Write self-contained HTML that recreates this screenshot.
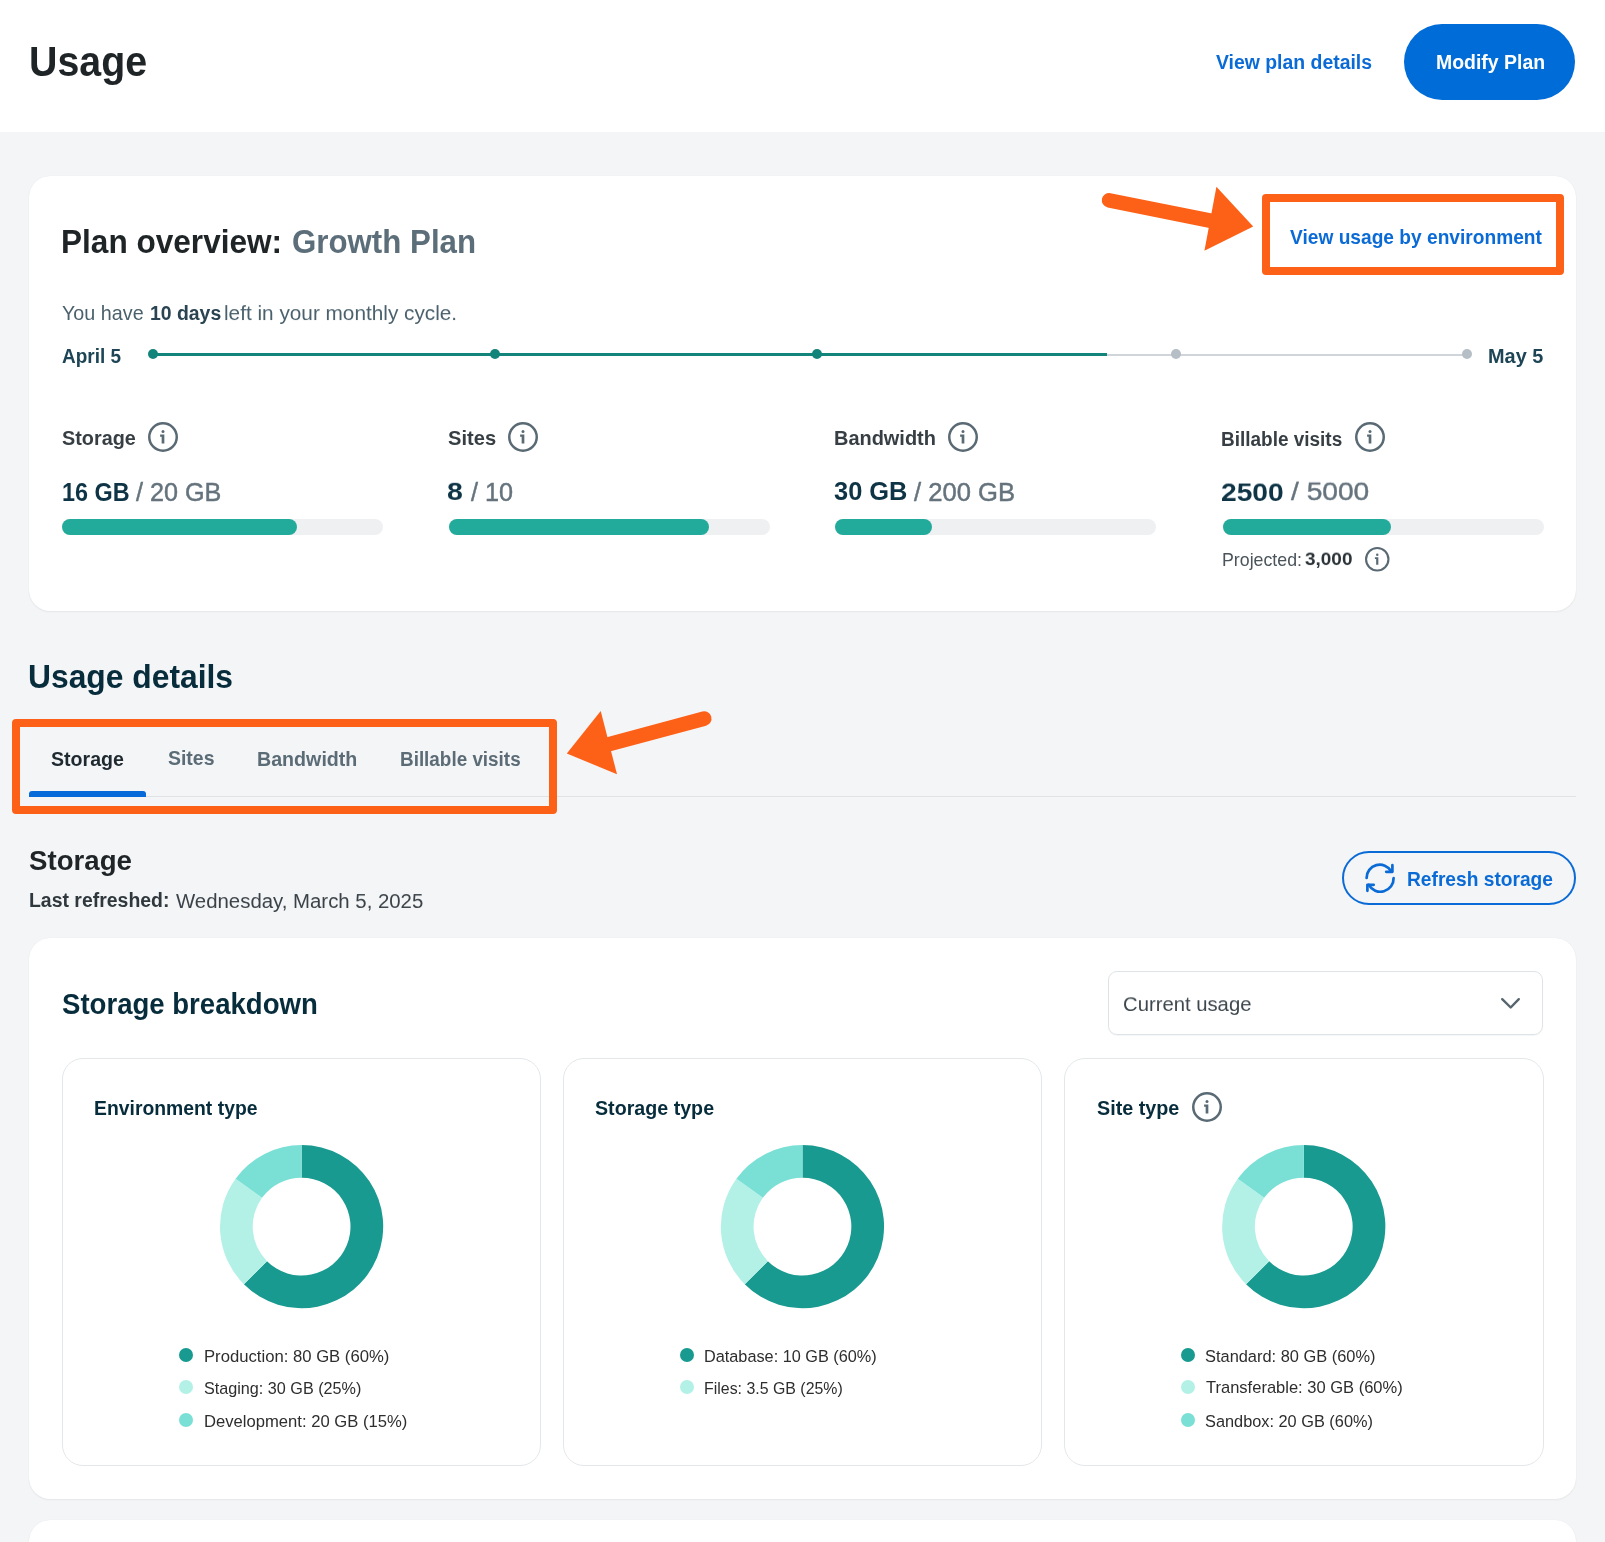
<!DOCTYPE html>
<html><head><meta charset="utf-8">
<style>
*{margin:0;padding:0;box-sizing:border-box}
html,body{width:1605px;height:1542px;overflow:hidden;background:#f4f5f7;font-family:"Liberation Sans",sans-serif}
.a{position:absolute;white-space:nowrap;will-change:transform}
b{font-weight:700}

</style></head><body>
<div class="a" style="left:0;top:0;width:1605px;height:132px;background:#fff"></div>
<div class="a" style="left:1404.4px;top:23.9px;width:171.4px;height:75.9px;border-radius:38px;background:#006cd7"></div>
<div class="a" style="left:29px;top:175.7px;width:1546.8px;height:435.1px;background:#fff;border-radius:21px;box-shadow:0 0 1px rgba(30,40,50,0.10),0 1px 2px rgba(30,40,50,0.06)"></div>
<div class="a" style="left:153px;top:352.5px;width:954px;height:3.4px;background:#12847a"></div>
<div class="a" style="left:1107px;top:353.6px;width:360px;height:2.2px;background:#cfd5da"></div>
<div class="a" style="left:147.80px;top:348.90px;width:10.4px;height:10.4px;border-radius:50%;background:#12847a"></div>
<div class="a" style="left:489.90px;top:348.90px;width:10.4px;height:10.4px;border-radius:50%;background:#12847a"></div>
<div class="a" style="left:812.40px;top:348.90px;width:10.4px;height:10.4px;border-radius:50%;background:#12847a"></div>
<div class="a" style="left:1170.70px;top:348.90px;width:10.4px;height:10.4px;border-radius:50%;background:#b6bec6"></div>
<div class="a" style="left:1461.90px;top:348.90px;width:10.4px;height:10.4px;border-radius:50%;background:#b6bec6"></div>
<div class="a" style="left:62.40px;top:519px;width:321px;height:16.2px;border-radius:8px;background:#eef0f2"></div>
<div class="a" style="left:62.40px;top:519px;width:234.80px;height:16.2px;border-radius:8px;background:#22ab9b"></div>
<div class="a" style="left:449.00px;top:519px;width:321px;height:16.2px;border-radius:8px;background:#eef0f2"></div>
<div class="a" style="left:449.00px;top:519px;width:260.00px;height:16.2px;border-radius:8px;background:#22ab9b"></div>
<div class="a" style="left:835.10px;top:519px;width:321px;height:16.2px;border-radius:8px;background:#eef0f2"></div>
<div class="a" style="left:835.10px;top:519px;width:96.90px;height:16.2px;border-radius:8px;background:#22ab9b"></div>
<div class="a" style="left:1222.50px;top:519px;width:321px;height:16.2px;border-radius:8px;background:#eef0f2"></div>
<div class="a" style="left:1222.50px;top:519px;width:168.20px;height:16.2px;border-radius:8px;background:#22ab9b"></div>
<svg class="a" style="left:147.60px;top:422.30px;overflow:visible" width="30.00" height="30.00" viewBox="0 0 30.00 30.00"><circle cx="15.00" cy="15.00" r="13.75" fill="none" stroke="#5a6a74" stroke-width="2.50"/><circle cx="15.00" cy="9.50" r="1.50" fill="#5a6a74"/><path d="M12.10 12.40 H16.35 V21.60 H13.65 V14.70 H12.10 Z" fill="#5a6a74"/></svg>
<svg class="a" style="left:508.40px;top:422.30px;overflow:visible" width="30.00" height="30.00" viewBox="0 0 30.00 30.00"><circle cx="15.00" cy="15.00" r="13.75" fill="none" stroke="#5a6a74" stroke-width="2.50"/><circle cx="15.00" cy="9.50" r="1.50" fill="#5a6a74"/><path d="M12.10 12.40 H16.35 V21.60 H13.65 V14.70 H12.10 Z" fill="#5a6a74"/></svg>
<svg class="a" style="left:948.00px;top:422.30px;overflow:visible" width="30.00" height="30.00" viewBox="0 0 30.00 30.00"><circle cx="15.00" cy="15.00" r="13.75" fill="none" stroke="#5a6a74" stroke-width="2.50"/><circle cx="15.00" cy="9.50" r="1.50" fill="#5a6a74"/><path d="M12.10 12.40 H16.35 V21.60 H13.65 V14.70 H12.10 Z" fill="#5a6a74"/></svg>
<svg class="a" style="left:1355.40px;top:422.30px;overflow:visible" width="30.00" height="30.00" viewBox="0 0 30.00 30.00"><circle cx="15.00" cy="15.00" r="13.75" fill="none" stroke="#5a6a74" stroke-width="2.50"/><circle cx="15.00" cy="9.50" r="1.50" fill="#5a6a74"/><path d="M12.10 12.40 H16.35 V21.60 H13.65 V14.70 H12.10 Z" fill="#5a6a74"/></svg>
<svg class="a" style="left:1364.75px;top:547.25px;overflow:visible" width="24.50" height="24.50" viewBox="0 0 24.50 24.50"><circle cx="12.25" cy="12.25" r="11.20" fill="none" stroke="#5a6a74" stroke-width="2.10"/><circle cx="12.25" cy="7.76" r="1.23" fill="#5a6a74"/><path d="M9.88 10.13 H13.35 V17.64 H11.15 V12.01 H9.88 Z" fill="#5a6a74"/></svg>
<div class="a" style="left:30px;top:796px;width:1546px;height:1.3px;background:#dfe3e6"></div>
<div class="a" style="left:29px;top:791px;width:117.4px;height:5.8px;border-radius:3px 3px 0 0;background:#066bd8"></div>
<div class="a" style="left:1341.7px;top:851px;width:234.2px;height:54.1px;border:2.6px solid #0b6bd6;border-radius:28px"></div>
<svg class="a" style="left:1362px;top:860px" width="36" height="36" viewBox="0 0 36 36" fill="none" stroke="#0b6bd6" stroke-width="2.7" stroke-linecap="round" stroke-linejoin="round"><path d="M4.6 18 A13.2 13.2 0 0 1 29.2 11.2"/><path d="M31.6 18 A13.2 13.2 0 0 1 6.8 24.8"/><path d="M30.4 5.2 L30.4 11.8 L24.2 11.8"/><path d="M5.4 30.8 L5.4 24.8 L11.7 24.8"/></svg>
<div class="a" style="left:29px;top:938.3px;width:1546.8px;height:560.7px;background:#fff;border-radius:21px;box-shadow:0 0 1px rgba(30,40,50,0.10),0 1px 2px rgba(30,40,50,0.06)"></div>
<div class="a" style="left:1108.2px;top:971.1px;width:435.1px;height:64.4px;border:1.5px solid #dde3e6;border-radius:9px;box-shadow:0 1px 1px rgba(0,0,0,0.04)"></div>
<svg class="a" style="left:1498px;top:994px" width="26" height="18" viewBox="0 0 26 18"><path d="M4.2 5.2 L12.7 13.5 L20.8 5.2" fill="none" stroke="#56656e" stroke-width="2.4" stroke-linecap="round" stroke-linejoin="round"/></svg>
<div class="a" style="left:62.20px;top:1057.6px;width:478.60px;height:408.3px;border:1.8px solid #e3e7ea;border-radius:21px"></div>
<div class="a" style="left:563.00px;top:1057.6px;width:478.70px;height:408.3px;border:1.8px solid #e3e7ea;border-radius:21px"></div>
<div class="a" style="left:1063.90px;top:1057.6px;width:479.50px;height:408.3px;border:1.8px solid #e3e7ea;border-radius:21px"></div>
<svg class="a" style="left:1192.00px;top:1091.70px;overflow:visible" width="30.00" height="30.00" viewBox="0 0 30.00 30.00"><circle cx="15.00" cy="15.00" r="13.75" fill="none" stroke="#5a6a74" stroke-width="2.50"/><circle cx="15.00" cy="9.50" r="1.50" fill="#5a6a74"/><path d="M12.10 12.40 H16.35 V21.60 H13.65 V14.70 H12.10 Z" fill="#5a6a74"/></svg>
<svg class="a" style="left:0;top:0" width="1605" height="1542"><path d="M301.60 1145.00 A81.60 81.60 0 1 1 243.90 1284.30 L267.02 1261.18 A48.90 48.90 0 1 0 301.60 1177.70 Z" fill="#189a90"/><path d="M243.90 1284.30 A81.60 81.60 0 0 1 235.58 1178.64 L262.04 1197.86 A48.90 48.90 0 0 0 267.02 1261.18 Z" fill="#b3f1e7"/><path d="M235.58 1178.64 A81.60 81.60 0 0 1 301.60 1145.00 L301.60 1177.70 A48.90 48.90 0 0 0 262.04 1197.86 Z" fill="#7ae0d6"/><path d="M802.45 1145.00 A81.60 81.60 0 1 1 744.75 1284.30 L767.87 1261.18 A48.90 48.90 0 1 0 802.45 1177.70 Z" fill="#189a90"/><path d="M744.75 1284.30 A81.60 81.60 0 0 1 736.43 1178.64 L762.89 1197.86 A48.90 48.90 0 0 0 767.87 1261.18 Z" fill="#b3f1e7"/><path d="M736.43 1178.64 A81.60 81.60 0 0 1 802.45 1145.00 L802.45 1177.70 A48.90 48.90 0 0 0 762.89 1197.86 Z" fill="#7ae0d6"/><path d="M1303.75 1145.00 A81.60 81.60 0 1 1 1246.05 1284.30 L1269.17 1261.18 A48.90 48.90 0 1 0 1303.75 1177.70 Z" fill="#189a90"/><path d="M1246.05 1284.30 A81.60 81.60 0 0 1 1237.73 1178.64 L1264.19 1197.86 A48.90 48.90 0 0 0 1269.17 1261.18 Z" fill="#b3f1e7"/><path d="M1237.73 1178.64 A81.60 81.60 0 0 1 1303.75 1145.00 L1303.75 1177.70 A48.90 48.90 0 0 0 1264.19 1197.86 Z" fill="#7ae0d6"/></svg>
<div class="a" style="left:178.80px;top:1347.50px;width:14.2px;height:14.2px;border-radius:50%;background:#189a90"></div>
<div class="a" style="left:178.80px;top:1380.30px;width:14.2px;height:14.2px;border-radius:50%;background:#b3f1e7"></div>
<div class="a" style="left:178.80px;top:1413.10px;width:14.2px;height:14.2px;border-radius:50%;background:#7ae0d6"></div>
<div class="a" style="left:679.60px;top:1347.50px;width:14.2px;height:14.2px;border-radius:50%;background:#189a90"></div>
<div class="a" style="left:679.60px;top:1380.30px;width:14.2px;height:14.2px;border-radius:50%;background:#b3f1e7"></div>
<div class="a" style="left:1180.50px;top:1347.50px;width:14.2px;height:14.2px;border-radius:50%;background:#189a90"></div>
<div class="a" style="left:1180.50px;top:1380.30px;width:14.2px;height:14.2px;border-radius:50%;background:#b3f1e7"></div>
<div class="a" style="left:1180.50px;top:1413.10px;width:14.2px;height:14.2px;border-radius:50%;background:#7ae0d6"></div>
<div class="a" style="left:29px;top:1520.4px;width:1546.8px;height:100px;background:#fff;border-radius:21px;box-shadow:0 0 1px rgba(30,40,50,0.10),0 1px 2px rgba(30,40,50,0.06)"></div>
<div class="a" style="left:1261.8px;top:194.3px;width:302.2px;height:81px;border:8.3px solid #fd6017;border-radius:4px"></div>
<div class="a" style="left:12.1px;top:719.4px;width:544.6px;height:95.4px;border:8.3px solid #fd6017;border-radius:4px"></div>
<svg class="a" style="left:0;top:0" width="1605" height="1542"><line x1="1109.1" y1="200.3" x2="1212" y2="221" stroke="#fd6017" stroke-width="14.6" stroke-linecap="round"/><polygon points="1216.4,186.8 1253.2,226.6 1204.4,250.7" fill="#fd6017"/><line x1="704.2" y1="718.6" x2="606" y2="745" stroke="#fd6017" stroke-width="14.6" stroke-linecap="round"/><polygon points="566.8,753.4 600.7,711.1 617,774.3" fill="#fd6017"/></svg>
<div id="usage" class="a" style="left:28.95px;top:43.14px;font-size:39.356px;line-height:39.356px;font-weight:700;color:#1f2427;transform:scaleY(1.082);transform-origin:0 33.31px;">Usage</div>
<div id="vpd" class="a" style="left:1216.00px;top:53.24px;font-size:19.414px;line-height:19.414px;font-weight:700;color:#0b6bd6;transform:scaleY(1.063);transform-origin:0 16.43px;">View plan details</div>
<div id="modify" class="a" style="left:1435.98px;top:53.23px;font-size:19.450px;line-height:19.450px;font-weight:700;color:#fff;transform:scaleY(1.061);transform-origin:0 16.46px;">Modify Plan</div>
<div id="po" class="a" style="left:60.95px;top:227.15px;font-size:31.591px;line-height:31.591px;font-weight:700;color:#1f2427;transform:scaleY(1.044);transform-origin:0 26.74px;">Plan overview:</div>
<div id="gp" class="a" style="left:291.98px;top:227.14px;font-size:31.266px;line-height:31.266px;font-weight:700;color:#5c6e79;transform:scaleY(1.055);transform-origin:0 26.47px;">Growth Plan</div>
<div id="vube" class="a" style="left:1289.89px;top:227.63px;font-size:19.165px;line-height:19.165px;font-weight:700;color:#0b6bd6;transform:scaleY(1.062);transform-origin:0 16.22px;">View usage by environment</div>
<div id="left1" class="a" style="left:62.01px;top:303.65px;font-size:19.753px;line-height:19.753px;font-weight:400;color:#4a616d;transform:scaleY(1.045);transform-origin:0 16.72px;">You have</div>
<div id="left2" class="a" style="left:149.64px;top:303.61px;font-size:19.419px;line-height:19.419px;font-weight:700;color:#2a4452;transform:scaleY(1.063);transform-origin:0 16.44px;">10 days</div>
<div id="left3" class="a" style="left:224.42px;top:302.64px;font-size:20.784px;line-height:20.784px;font-weight:400;color:#4a616d;transform:scaleY(0.993);transform-origin:0 17.59px;">left in your monthly cycle.</div>
<div id="apr" class="a" style="left:61.98px;top:347.10px;font-size:18.983px;line-height:18.983px;font-weight:700;color:#1d4556;transform:scaleY(1.087);transform-origin:0 16.07px;">April 5</div>
<div id="may" class="a" style="left:1487.97px;top:347.02px;font-size:19.921px;line-height:19.921px;font-weight:700;color:#1d4556;transform:scaleY(1.036);transform-origin:0 16.86px;">May 5</div>
<div id="lab0" class="a" style="left:61.75px;top:429.02px;font-size:19.828px;line-height:19.828px;font-weight:700;color:#373f44;transform:scaleY(1.019);transform-origin:0 16.78px;">Storage</div>
<div id="lab1" class="a" style="left:447.95px;top:428.01px;font-size:20.123px;line-height:20.123px;font-weight:700;color:#373f44;transform:scaleY(1.004);transform-origin:0 17.03px;">Sites</div>
<div id="lab2" class="a" style="left:833.67px;top:428.99px;font-size:19.950px;line-height:19.950px;font-weight:700;color:#373f44;transform:scaleY(1.013);transform-origin:0 16.89px;">Bandwidth</div>
<div id="lab3" class="a" style="left:1221.44px;top:430.03px;font-size:18.980px;line-height:18.980px;font-weight:700;color:#373f44;transform:scaleY(1.064);transform-origin:0 16.07px;">Billable visits</div>
<div id="vb0" class="a" style="left:61.85px;top:481.52px;font-size:23.406px;line-height:23.406px;font-weight:700;color:#0e3446;transform:scaleY(1.105);transform-origin:0 19.81px;">16 GB</div>
<div id="vg0" class="a" style="left:136.00px;top:479.52px;font-size:25.200px;line-height:25.200px;font-weight:400;color:#65737d;transform:scaleY(1.027);transform-origin:0 21.33px;-webkit-text-stroke:0.45px #65737d;">/ 20 GB</div>
<div id="vb1" class="a" style="left:447.34px;top:476.49px;font-size:28.500px;line-height:28.500px;font-weight:700;color:#0e3446;transform:scaleY(0.908);transform-origin:0 24.13px;">8</div>
<div id="vg1" class="a" style="left:471.00px;top:479.51px;font-size:25.231px;line-height:25.231px;font-weight:400;color:#65737d;transform:scaleY(1.025);transform-origin:0 21.36px;-webkit-text-stroke:0.45px #65737d;">/ 10</div>
<div id="vb2" class="a" style="left:833.63px;top:479.47px;font-size:25.420px;line-height:25.420px;font-weight:700;color:#0e3446;transform:scaleY(1.018);transform-origin:0 21.52px;">30 GB</div>
<div id="vg2" class="a" style="left:914.09px;top:479.55px;font-size:25.607px;line-height:25.607px;font-weight:400;color:#65737d;transform:scaleY(1.010);transform-origin:0 21.68px;-webkit-text-stroke:0.45px #65737d;">/ 200 GB</div>
<div id="vb3" class="a" style="left:1221.33px;top:477.31px;font-size:28.191px;line-height:28.191px;font-weight:700;color:#0e3446;transform:scaleY(0.918);transform-origin:0 23.86px;">2500</div>
<div id="vg3" class="a" style="left:1290.66px;top:476.54px;font-size:28.168px;line-height:28.168px;font-weight:400;color:#65737d;transform:scaleY(0.918);transform-origin:0 23.84px;-webkit-text-stroke:0.45px #65737d;">/ 5000</div>
<div id="proj1" class="a" style="left:1221.78px;top:552.49px;font-size:17.775px;line-height:17.775px;font-weight:400;color:#4a545a;transform:scaleY(1.022);transform-origin:0 15.05px;">Projected:</div>
<div id="proj2" class="a" style="left:1304.74px;top:550.48px;font-size:18.976px;line-height:18.976px;font-weight:700;color:#2b3338;transform:scaleY(0.957);transform-origin:0 16.06px;">3,000</div>
<div id="ud" class="a" style="left:27.97px;top:662.33px;font-size:31.804px;line-height:31.804px;font-weight:700;color:#072c3c;transform:scaleY(1.028);transform-origin:0 26.92px;">Usage details</div>
<div id="tab0" class="a" style="left:51.07px;top:749.52px;font-size:19.611px;line-height:19.611px;font-weight:700;color:#1f2a30;transform:scaleY(1.052);transform-origin:0 16.60px;">Storage</div>
<div id="tab1" class="a" style="left:168.33px;top:749.43px;font-size:19.465px;line-height:19.465px;font-weight:700;color:#5b6c76;transform:scaleY(1.060);transform-origin:0 16.48px;">Sites</div>
<div id="tab2" class="a" style="left:257.34px;top:749.51px;font-size:19.655px;line-height:19.655px;font-weight:700;color:#5b6c76;transform:scaleY(1.050);transform-origin:0 16.64px;">Bandwidth</div>
<div id="tab3" class="a" style="left:400.05px;top:750.54px;font-size:18.897px;line-height:18.897px;font-weight:700;color:#5b6c76;transform:scaleY(1.092);transform-origin:0 16.00px;">Billable visits</div>
<div id="sth" class="a" style="left:28.98px;top:846.59px;font-size:27.652px;line-height:27.652px;font-weight:700;color:#1f2427;transform:scaleY(1.030);transform-origin:0 23.41px;">Storage</div>
<div id="lr1" class="a" style="left:28.98px;top:891.49px;font-size:19.466px;line-height:19.466px;font-weight:700;color:#2f383d;transform:scaleY(1.045);transform-origin:0 16.48px;">Last refreshed:</div>
<div id="lr2" class="a" style="left:175.96px;top:890.54px;font-size:20.381px;line-height:20.381px;font-weight:400;color:#3a4248;transform:scaleY(0.998);transform-origin:0 17.25px;">Wednesday, March 5, 2025</div>
<div id="rs" class="a" style="left:1407.18px;top:869.64px;font-size:19.187px;line-height:19.187px;font-weight:700;color:#0b6bd6;transform:scaleY(1.030);transform-origin:0 16.24px;">Refresh storage</div>
<div id="sb" class="a" style="left:61.58px;top:990.93px;font-size:27.572px;line-height:27.572px;font-weight:700;color:#072c3c;transform:scaleY(1.039);transform-origin:0 23.34px;">Storage breakdown</div>
<div id="cu" class="a" style="left:1123.16px;top:994.17px;font-size:20.270px;line-height:20.270px;font-weight:400;color:#3d474d;transform:scaleY(0.982);transform-origin:0 17.16px;">Current usage</div>
<div id="ct0" class="a" style="left:93.68px;top:1098.79px;font-size:19.366px;line-height:19.366px;font-weight:700;color:#072c3c;transform:scaleY(1.066);transform-origin:0 16.39px;">Environment type</div>
<div id="ct1" class="a" style="left:595.27px;top:1098.85px;font-size:19.662px;line-height:19.662px;font-weight:700;color:#072c3c;transform:scaleY(1.050);transform-origin:0 16.64px;">Storage type</div>
<div id="ct2" class="a" style="left:1096.75px;top:1098.87px;font-size:19.740px;line-height:19.740px;font-weight:700;color:#072c3c;transform:scaleY(1.046);transform-origin:0 16.71px;">Site type</div>
<div id="lg00" class="a" style="left:203.77px;top:1348.63px;font-size:16.682px;line-height:16.682px;font-weight:400;color:#2e2e2e;transform:scaleY(1.019);transform-origin:0 14.12px;">Production: 80 GB (60%)</div>
<div id="lg01" class="a" style="left:203.78px;top:1380.40px;font-size:16.188px;line-height:16.188px;font-weight:400;color:#2e2e2e;transform:scaleY(1.051);transform-origin:0 13.70px;">Staging: 30 GB (25%)</div>
<div id="lg02" class="a" style="left:203.77px;top:1414.25px;font-size:16.636px;line-height:16.636px;font-weight:400;color:#2e2e2e;transform:scaleY(1.022);transform-origin:0 14.08px;">Development: 20 GB (15%)</div>
<div id="lg10" class="a" style="left:704.37px;top:1347.59px;font-size:16.283px;line-height:16.283px;font-weight:400;color:#2e2e2e;transform:scaleY(1.044);transform-origin:0 13.78px;">Database: 10 GB (60%)</div>
<div id="lg11" class="a" style="left:704.37px;top:1381.44px;font-size:15.918px;line-height:15.918px;font-weight:400;color:#2e2e2e;transform:scaleY(1.068);transform-origin:0 13.47px;">Files: 3.5 GB (25%)</div>
<div id="lg20" class="a" style="left:1204.68px;top:1347.60px;font-size:16.424px;line-height:16.424px;font-weight:400;color:#2e2e2e;transform:scaleY(1.035);transform-origin:0 13.90px;">Standard: 80 GB (60%)</div>
<div id="lg21" class="a" style="left:1205.70px;top:1380.37px;font-size:16.531px;line-height:16.531px;font-weight:400;color:#2e2e2e;transform:scaleY(1.029);transform-origin:0 13.99px;">Transferable: 30 GB (60%)</div>
<div id="lg22" class="a" style="left:1204.68px;top:1413.16px;font-size:16.330px;line-height:16.330px;font-weight:400;color:#2e2e2e;transform:scaleY(1.041);transform-origin:0 13.82px;">Sandbox: 20 GB (60%)</div>
</body></html>
